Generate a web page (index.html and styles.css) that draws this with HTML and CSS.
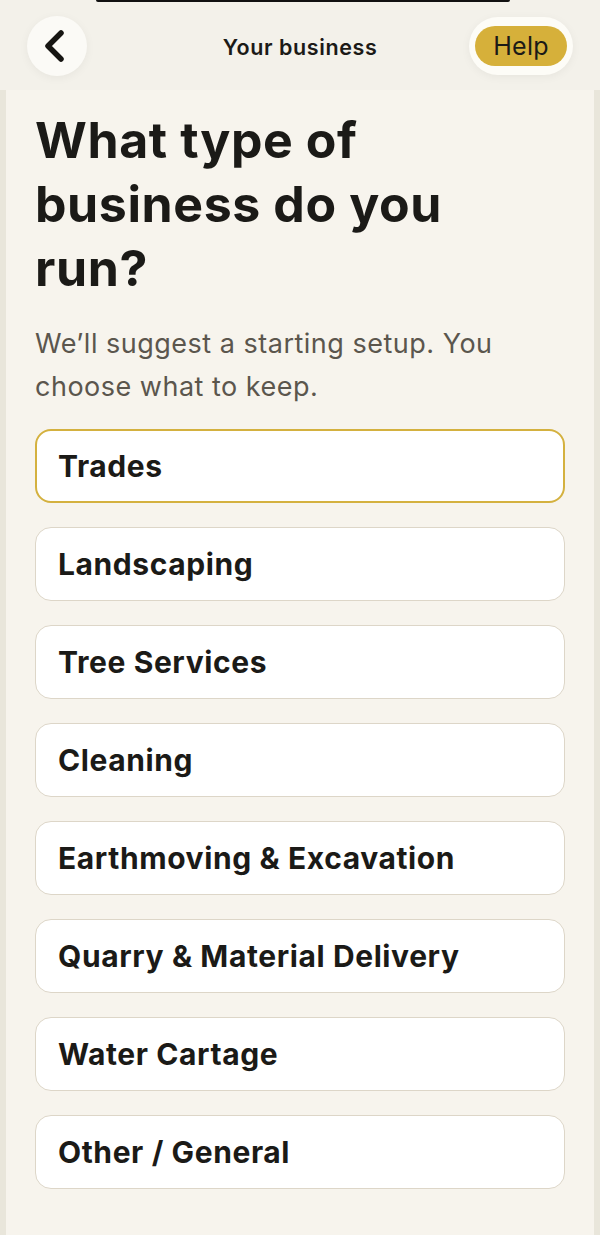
FILE: index.html
```html
<!DOCTYPE html>
<html>
<head>
    <title>Your business</title>
    <link rel="stylesheet" href="styles.css">
</head>
<body>
    <div class="notch"></div>
    <header class="topbar">
        <button class="back-btn" aria-label="Back">
            <svg width="26" height="34" viewBox="0 0 26 34">
                <path d="M19 4 L6 17 L19 30" fill="none" stroke="#161512" stroke-width="5.5" stroke-linecap="round" stroke-linejoin="round"/>
            </svg>
        </button>
        <h1 class="topbar-title">Your business</h1>
        <div class="help-ring">
            <button class="help-btn">Help</button>
        </div>
    </header>

    <main class="page">
        <h2 class="question">What type of business do you run?</h2>
        <p class="hint">We’ll suggest a starting setup. You choose what to keep.</p>

        <div class="options">
            <div class="option selected">Trades</div>
            <div class="option">Landscaping</div>
            <div class="option">Tree Services</div>
            <div class="option">Cleaning</div>
            <div class="option">Earthmoving &amp; Excavation</div>
            <div class="option">Quarry &amp; Material Delivery</div>
            <div class="option">Water Cartage</div>
            <div class="option">Other / General</div>
        </div>
    </main>
</body>
</html>
```

FILE: styles.css
```css
html, body {
    margin: 0;
    padding: 0;
}

body {
    font-family: Inter, "Noto Sans", sans-serif;
    background: #e9e6db;
    color: #1b1a17;
    width: 600px;
    height: 1235px;
    overflow: hidden;
    position: relative;
}

.notch {
    position: absolute;
    top: 0;
    left: 96px;
    width: 414px;
    height: 2px;
    background: #111;
    border-radius: 0 0 3px 3px;
    z-index: 2;
}

.topbar {
    height: 90px;
    background: #f3f1ea;
    display: flex;
    align-items: center;
    justify-content: space-between;
    padding: 0 27px 0 27px;
    box-sizing: border-box;
}

.back-btn {
    width: 60px;
    height: 60px;
    border-radius: 50%;
    border: none;
    background: #fbfaf6;
    box-shadow: 0 2px 10px rgba(0, 0, 0, 0.05);
    display: flex;
    align-items: center;
    justify-content: center;
    padding: 0 4px 0 0;
    margin-top: 2px;
}

.topbar-title {
    font-size: 21.5px;
    font-weight: 600;
    letter-spacing: 0.6px;
    margin: 0;
    position: absolute;
    left: 0;
    right: 0;
    top: 34px;
    text-align: center;
    pointer-events: none;
}

.help-ring {
    background: #fdfcf7;
    border-radius: 30px;
    padding: 9px 6px;
    box-shadow: 0 2px 10px rgba(0, 0, 0, 0.05);
    margin-top: 2px;
}

.help-btn {
    display: block;
    background: #d6b03a;
    border: none;
    border-radius: 20px;
    height: 40px;
    width: 92px;
    font-family: Inter, sans-serif;
    font-size: 25px;
    font-weight: 400;
    letter-spacing: 0.3px;
    color: #1b1a17;
    padding: 0;
}

.page {
    background: #f7f4ed;
    margin: 0 6px;
    padding: 18px 29px 0 29px;
    height: 1145px;
    box-sizing: border-box;
}

.question {
    font-size: 50px;
    font-weight: 700;
    line-height: 64px;
    margin: 0;
    letter-spacing: 0.6px;
    max-width: 440px;
}

.hint {
    font-size: 27px;
    line-height: 43px;
    color: #5b564d;
    margin: 22px 0 21px 0;
    font-weight: 400;
    letter-spacing: 0.5px;
}

.options {
    display: flex;
    flex-direction: column;
    gap: 24px;
}

.option {
    height: 74px;
    box-sizing: border-box;
    background: #fff;
    border: 1px solid #ddd6c8;
    border-radius: 16px;
    padding: 0 22px;
    display: flex;
    align-items: center;
    font-size: 30px;
    font-weight: 700;
    letter-spacing: 0.6px;
}

.option.selected {
    border: 2px solid #d4b13f;
    padding: 0 21px;
}
```
